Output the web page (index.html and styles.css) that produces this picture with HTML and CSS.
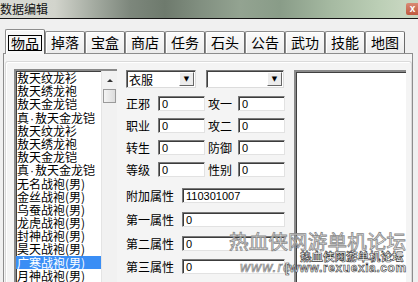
FILE: index.html
```html
<!DOCTYPE html>
<html>
<head>
<meta charset="utf-8">
<link rel="stylesheet" href="styles.css">
</head>
<body>
<div class="win">
  <div class="titlebar">
    <span class="title">数据编辑</span>
    <span class="close">x</span>
  </div>
  <div class="body">
    <div class="tabs">
      <div class="tab sel"><span class="focus">物品</span></div>
      <div class="tab">掉落</div>
      <div class="tab">宝盒</div>
      <div class="tab">商店</div>
      <div class="tab">任务</div>
      <div class="tab">石头</div>
      <div class="tab">公告</div>
      <div class="tab">武功</div>
      <div class="tab">技能</div>
      <div class="tab">地图</div>
    </div>
    <div class="panel">
      <div class="frame">
        <div class="listbox">
          <ul class="items">
            <li>敖天纹龙衫</li>
            <li>敖天绣龙袍</li>
            <li>敖天金龙铠</li>
            <li>真<span class="dot">·</span>敖天金龙铠</li>
            <li>敖天纹龙衫</li>
            <li>敖天绣龙袍</li>
            <li>敖天金龙铠</li>
            <li>真<span class="dot">·</span>敖天金龙铠</li>
            <li>无名战袍(男)</li>
            <li>金丝战袍(男)</li>
            <li>乌蚕战袍(男)</li>
            <li>龙虎战袍(男)</li>
            <li>封神战袍(男)</li>
            <li>昊天战袍(男)</li>
            <li class="on">广寒战袍(男)</li>
            <li>月神战袍(男)</li>
          </ul>
          <div class="vscroll">
            <div class="arrow"></div>
            <div class="thumb"></div>
          </div>
        </div>
        <div class="form">
          <div class="combos">
            <div class="combo c1"><span class="cv">衣服</span><span class="btn">▼</span></div>
            <div class="combo c2"><span class="cv"></span><span class="btn">▼</span></div>
          </div>
          <div class="row first">
            <span class="lbl">正邪</span><span class="inp">0</span>
            <span class="lbl l2">攻一</span><span class="inp">0</span>
          </div>
          <div class="row">
            <span class="lbl">职业</span><span class="inp">0</span>
            <span class="lbl l2">攻二</span><span class="inp">0</span>
          </div>
          <div class="row">
            <span class="lbl">转生</span><span class="inp">0</span>
            <span class="lbl l2">防御</span><span class="inp">0</span>
          </div>
          <div class="row">
            <span class="lbl">等级</span><span class="inp">0</span>
            <span class="lbl l2">性别</span><span class="inp">0</span>
          </div>
          <div class="row wide w1">
            <span class="lbl">附加属性</span><span class="inp">110301007</span>
          </div>
          <div class="row wide">
            <span class="lbl">第一属性</span><span class="inp">0</span>
          </div>
          <div class="row wide">
            <span class="lbl">第二属性</span><span class="inp">0</span>
          </div>
          <div class="row wide w4">
            <span class="lbl">第三属性</span><span class="inp">0</span>
          </div>
        </div>
        <div class="bigbox"></div>
      </div>
    </div>
  </div>
  <div class="wm wm-big">热血侠网游单机论坛</div>
  <div class="wm wm-url">www.re</div>
  <div class="wm wm-small">热血侠网游单机论坛</div>
  <div class="wm wm-surl">[www.rexuexia.com</div>
</div>
</body>
</html>
```
FILE: styles.css
```css
* { box-sizing: border-box; margin: 0; padding: 0; }
html, body { width: 418px; height: 282px; overflow: hidden; }
body { background: #f0f0f0; font-family: "Noto Sans CJK SC", "Liberation Sans", sans-serif; color: #000; }
.win { position: relative; width: 418px; height: 282px; overflow: hidden; }

.titlebar {
  height: 19px;
  border-bottom: 1px solid #151515;
  background: linear-gradient(90deg, #dadbd5 0px, #d2d4cc 55px, #a3aaa0 95px, #7d877c 130px, #6e7a6d 165px, #818f80 200px, #93a391 240px, #899c88 280px, #a5b9a1 330px, #bccfb6 380px, #c7d6c0 404px);
  display: flex;
  align-items: flex-start;
  justify-content: space-between;
}
.title { font-size: 12px; line-height: 17px; color: #111; }
.close {
  width: 13px; height: 12px; margin-top: 3px; margin-right: -1px;
  background: linear-gradient(#d98a74, #c0583f);
  color: #fff; font-family: "Liberation Sans", sans-serif; font-size: 10px; font-weight: bold;
  line-height: 11px; text-align: center;
  border-radius: 2px 0 0 2px;
}

.body { padding: 9px 0 0 5px; }
.tabs { display: flex; align-items: flex-end; height: 25px; }
.tab {
  width: 40px; height: 22px;
  border: 1px solid #8d8d8d;
  border-bottom: none;
  border-right-color: #6a6a6a;
  background: linear-gradient(#fbfbfb, #ececec);
  box-shadow: inset 1px 1px 0 #fff;
  font-size: 14px; line-height: 21px; text-align: center;
  border-radius: 2px 2px 0 0;
}
.tab.sel { height: 25px; background: #f7f7f7; position: relative; z-index: 1; margin-bottom: -1px; padding-top: 3px; }
.focus { display: inline-block; border: 1px solid #000; line-height: 14px; padding: 0 2px; }

.panel {
  margin-left: -2px;
  width: 410px;
  height: 231px;
  border: 1px solid #8d8d8d;
  border-bottom: none;
  background: #f4f4f4;
  padding: 7px 0 0 1px;
}
.frame {
  height: 224px;
  border: 1px solid #dadada;
  border-bottom: none;
  border-radius: 3px 3px 0 0;
  box-shadow: inset 1px 1px 0 #fff;
  display: flex;
  align-items: flex-start;
  padding: 7px 0 0 8px;
}

.listbox {
  width: 103px; height: 230px;
  background: #fff;
  border-top: 2px solid #8a8a8a;
  border-left: 2px solid #8a8a8a;
  box-shadow: inset 1px 1px 0 #404040;
  display: flex;
}
.items { list-style: none; width: 85px; }
.items li { font-size: 12px; line-height: 13.2px; height: 13.2px; white-space: nowrap; padding-left: 1px; }
.items li.on { background: #3a8ef5; color: #fff; }
.dot { font-family: "Liberation Sans", sans-serif; padding: 0 1px; }
.vscroll { width: 16px; background: #f1f1f1; border-left: 1px solid #e4e4e4; }
.arrow {
  margin: 8px auto 0; width: 0; height: 0;
  border-left: 3px solid transparent; border-right: 3px solid transparent;
  border-bottom: 3px solid #333;
}
.thumb {
  margin: 7px 1px 0 1px; height: 14px;
  border: 1px solid #9a9a9a;
  background: linear-gradient(90deg, #f4f4f4, #dcdcdc);
}

.form { width: 160px; margin-left: 9px; display: flex; flex-direction: column; }
.combos { display: flex; gap: 10px; height: 18px; margin-top: 1px; }
.combo {
  height: 18px; background: #fff;
  border-top: 1px solid #7a7a7a; border-left: 1px solid #7a7a7a;
  border-right: 1px solid #dcdcdc; border-bottom: 1px solid #dcdcdc;
  box-shadow: inset 1px 1px 0 #404040;
  display: flex; justify-content: space-between; align-items: center;
}
.c1 { width: 70px; }
.c2 { width: 78px; }
.cv { font-size: 12px; line-height: 15px; padding-left: 2px; }
.btn {
  width: 15px; height: 14px; margin-right: 1px;
  background: #ececec;
  border: 1px solid #fff; border-right-color: #666; border-bottom-color: #666;
  font-size: 7px; line-height: 12px; text-align: center; color: #000;
  font-family: "DejaVu Sans", sans-serif;
}

.row { display: flex; align-items: center; height: 15px; margin-top: 7px; }
.row.first { margin-top: 8px; }
.row.wide { margin-top: 9px; }
.row.w1 { margin-top: 11px; }
.row.w4 { margin-top: 8px; }
.lbl { width: 32px; font-size: 12px; line-height: 15px; white-space: nowrap; }
.lbl.l2 { width: 31px; margin-left: 2px; padding-left: 1px; }
.wide .lbl { width: 56px; }
.inp {
  width: 47px; height: 15px; background: #fff;
  border-top: 1px solid #7a7a7a; border-left: 1px solid #7a7a7a;
  border-right: 1px solid #e2e2e2; border-bottom: 1px solid #e2e2e2;
  box-shadow: inset 1px 1px 0 #3c3c3c;
  font-family: "Liberation Sans", sans-serif; font-size: 11px; line-height: 14px; padding-left: 3px;
}
.wide .inp { width: 103px; }

.bigbox {
  width: 112px; height: 230px; margin-left: 8px; margin-top: 1px;
  background: #fff;
  border-top: 2px solid #8a8a8a; border-left: 2px solid #8a8a8a;
  box-shadow: inset 1px 1px 0 #404040;
}

.wm { position: absolute; white-space: nowrap; pointer-events: none; }
.wm-big {
  left: 229px; top: 228px; font-size: 19.5px; line-height: 26px; letter-spacing: 0.2px;
  color: rgba(235,235,235,0.75); -webkit-text-stroke: 0.8px #8a8a8a;
}
.wm-url {
  left: 240px; top: 259px; font-family: "Liberation Sans", sans-serif; font-size: 14px; line-height: 16px; font-style: italic;
  color: rgba(235,235,235,0.7); -webkit-text-stroke: 0.7px #8a8a8a; letter-spacing: 1px;
}
.wm-small {
  left: 300px; top: 249px; font-size: 11.5px; line-height: 14px; font-weight: bold;
  color: #fff; -webkit-text-stroke: 0.6px #333;
}
.wm-surl {
  left: 285px; top: 262px; font-family: "Liberation Sans", sans-serif; font-size: 12px; line-height: 13px; font-weight: bold;
  color: #fff; -webkit-text-stroke: 0.6px #333; letter-spacing: 0.6px;
}
```
